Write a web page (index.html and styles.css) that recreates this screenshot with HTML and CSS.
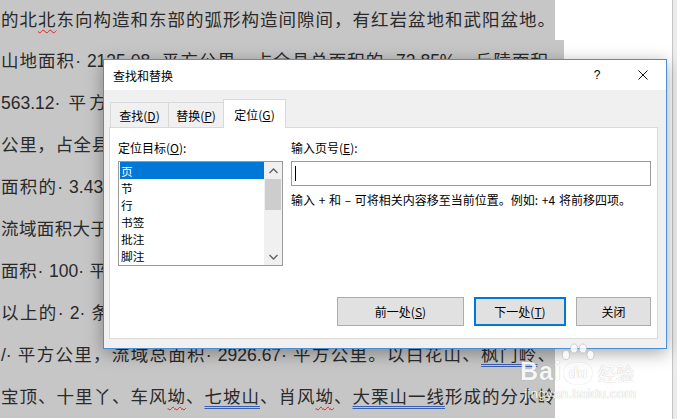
FILE: index.html
```html
<!DOCTYPE html>
<html lang="zh-CN">
<head>
<meta charset="utf-8">
<title>查找和替换</title>
<link rel="stylesheet" href="styles.css">
</head>
<body>
<div class="screen">
  <div class="doc">
    <div class="line first">的北<span class="wavy">北</span>东向构造和东部的弧形构造间隙间，有红岩盆地和武阳盆地。</div>
    <div class="line wide">山地面积· 2135.08· 平方公里，占全县总面积的· 72.85%，丘陵面积·</div>
    <div class="line">563.12· 平方公里，占全县总面积的· 19.21%，平原面积· 102.5</div>
    <div class="line">公里，占全县总面积的· 4.65%；水域面积· 100.51· 平方公里，占全县</div>
    <div class="line">面积的· 3.43%。境内河流众多，水系发达，共有大小河流· 87· 条。</div>
    <div class="line">流域面积大于· 10· 平方公里的河流有· 37· 条，流域面积在· 50· 平方公</div>
    <div class="line">面积· 100· 平方公里以上的河流有· 8· 条，1000· 平方公里以上的河流</div>
    <div class="line">以上的· 2· 条，即沂河和东汶河，境内河长· 229.1· 公里，流域面积</div>
    <div class="line">/· 平方公里，流域总面积· 2926.67· 平方公里。以白花山、<span class="dbl">枫门岭</span>、</div>
    <div class="line">宝顶、十里丫、车风<span class="wavy">坳</span>、<span class="dbl">七坡山</span>、肖风<span class="wavy">坳</span>、<span class="dbl">大栗山一线</span>形成的分水岭</div>
  </div>
  <div class="edge"></div>
</div>

<div class="dialog">
  <div class="titlebar">
    <div class="title">查找和替换</div>
    <div class="tbtn">?</div>
    <div class="tbtn">
      <svg width="10" height="10" viewBox="0 0 10 10"><path d="M0.5 0.5 L9.5 9.5 M9.5 0.5 L0.5 9.5" stroke="#111" stroke-width="1" fill="none"/></svg>
    </div>
  </div>
  <div class="dbody">
    <div class="tabs">
      <div class="tab t1">查找(<u>D</u>)</div>
      <div class="tab t2">替换(<u>P</u>)</div>
      <div class="tab t3 active">定位(<u>G</u>)</div>
    </div>
    <div class="panel">
      <div class="cols">
        <div class="left">
          <div class="label">定位目标(<u>O</u>):</div>
          <div class="listbox">
            <div class="items">
              <div class="item sel">页</div>
              <div class="item">节</div>
              <div class="item">行</div>
              <div class="item">书签</div>
              <div class="item">批注</div>
              <div class="item">脚注</div>
            </div>
            <div class="sbar">
              <div class="arrow">
                <svg width="9" height="6" viewBox="0 0 9 6"><path d="M0.5 5 L4.5 1 L8.5 5" stroke="#606060" stroke-width="1.3" fill="none"/></svg>
              </div>
              <div class="thumb"></div>
              <div class="track"></div>
              <div class="arrow">
                <svg width="9" height="6" viewBox="0 0 9 6"><path d="M0.5 1 L4.5 5 L8.5 1" stroke="#606060" stroke-width="1.3" fill="none"/></svg>
              </div>
            </div>
          </div>
        </div>
        <div class="right">
          <div class="label">输入页号(<u>E</u>):</div>
          <div class="input"><span class="caret"></span></div>
          <div class="help">输入 + 和 – 可将相关内容移至当前位置。例如: +4 将前移四项。</div>
        </div>
      </div>
      <div class="buttons">
        <div class="btn prev">前一处(<u>S</u>)</div>
        <div class="btn next default">下一处(<u>T</u>)</div>
        <div class="btn close">关闭</div>
      </div>
    </div>
  </div>
</div>

<div class="wm">
  <div class="wm-top">
    <span class="wm-bai">Bai</span>
    <span class="wm-paw">
      <svg class="toes" width="34" height="18" viewBox="0 0 34 18">
        <ellipse cx="5" cy="12" rx="3.5" ry="4.5" fill="#fff" stroke="#bdbdbd" stroke-width="0.8"/>
        <ellipse cx="13" cy="5.5" rx="3.5" ry="4.5" fill="#fff" stroke="#bdbdbd" stroke-width="0.8"/>
        <ellipse cx="22" cy="5.5" rx="3.5" ry="4.5" fill="#fff" stroke="#bdbdbd" stroke-width="0.8"/>
        <ellipse cx="29.5" cy="12" rx="3.5" ry="4.5" fill="#fff" stroke="#bdbdbd" stroke-width="0.8"/>
      </svg>
      <span class="wm-du">du</span>
    </span>
    <span class="wm-jy">经验</span>
  </div>
  <div class="wm-url">jingyan.baidu.com</div>
</div>
</body>
</html>
```

FILE: styles.css
```css
* { box-sizing: border-box; }
html, body { margin: 0; padding: 0; }
body {
  width: 677px;
  height: 419px;
  overflow: hidden;
  position: relative;
  background: #fff;
  font-family: "Liberation Sans", "Noto Sans CJK SC", sans-serif;
}

/* document behind */
.screen { display: flex; height: 419px; }
.doc { width: 672px; }
.line {
  width: 555px;
  height: 42px;
  line-height: 42px;
  padding-left: 1px;
  background: #c6c6c6;
  color: #2a2a2a;
  font-size: 17.5px;
  text-align: justify;
  text-align-last: justify;
  overflow: hidden;
}
.line.first { height: 40px; line-height: 40px; }
.line.wide { width: 564px; padding-right: 9px; }
.wavy {
  text-decoration: underline wavy #e02020;
  text-decoration-thickness: 1px;
  text-underline-offset: 3px;
}
.dbl {
  text-decoration: underline double #3a5fb0;
  text-decoration-thickness: 1px;
  text-underline-offset: 3px;
}
.edge {
  width: 5px;
  border-left: 1px solid #c4c4c4;
  background: #ececec;
}

/* dialog */
.dialog {
  position: absolute;
  left: 103px;
  top: 59px;
  width: 564px;
  height: 290px;
  background: #f0f0f0;
  border: 1px solid #4a8fd6;
  box-shadow: 0 4px 16px rgba(0, 0, 0, 0.35);
  font-family: "Noto Sans CJK SC", "Liberation Sans", sans-serif;
  font-size: 12px;
  color: #000;
  display: flex;
  flex-direction: column;
}
.titlebar {
  height: 30px;
  background: #fff;
  display: flex;
  align-items: center;
}
.title { flex: 1; padding-left: 9px; }
.tbtn {
  width: 46px;
  height: 30px;
  display: flex;
  align-items: center;
  justify-content: center;
  font-family: "Liberation Sans", sans-serif;
  font-size: 12px;
}
.dbody {
  flex: 1;
  padding: 9px 8px 9px 5px;
  display: flex;
  flex-direction: column;
}
.tabs {
  height: 28px;
  display: flex;
  align-items: flex-end;
  padding-left: 1px;
}
.tab {
  height: 25px;
  border: 1px solid #d9d9d9;
  border-bottom: none;
  margin-right: -1px;
  display: flex;
  align-items: center;
  justify-content: center;
  background: #f0f0f0;
}
.tab.t1 { width: 59px; }
.tab.t2 { width: 56px; }
.tab.t3 { width: 63px; }
.tab.active {
  height: 29px;
  margin-bottom: -1px;
  background: #fff;
  position: relative;
  z-index: 1;
}
.panel {
  height: 212px;
  background: #fff;
  border: 1px solid #d9d9d9;
  padding: 12px 6px 12px 8px;
  display: flex;
  flex-direction: column;
}
.cols { display: flex; gap: 8px; }
.left { width: 165px; }
.right { flex: 1; }
.label { height: 16px; line-height: 16px; margin-bottom: 5px; }
.listbox {
  height: 105px;
  border: 1px solid #9a9a9a;
  padding-left: 1px;
  display: flex;
}
.items { flex: 1; }
.item { height: 17px; line-height: 17px; padding-left: 1px; font-size: 11.7px; }
.item.sel { background: #0078d7; color: #fff; }
.sbar {
  width: 18px;
  background: #f0f0f0;
  display: flex;
  flex-direction: column;
}
.arrow {
  height: 17px;
  display: flex;
  align-items: center;
  justify-content: center;
}
.thumb { height: 31px; margin: 0 1px; background: #cdcdcd; }
.track { flex: 1; }
.input {
  height: 25px;
  border: 1px solid #9a9a9a;
  display: flex;
  align-items: center;
}
.caret {
  width: 1px;
  height: 15px;
  margin-left: 3px;
  background: #000;
}
.help { margin-top: 6px; line-height: 16px; white-space: nowrap; word-spacing: 1px; }
.buttons {
  margin-top: auto;
  display: flex;
  justify-content: flex-end;
  gap: 10px;
}
.btn {
  height: 29px;
  border: 1px solid #adadad;
  background: #e1e1e1;
  display: flex;
  align-items: center;
  justify-content: center;
}
.btn.prev { width: 127px; }
.btn.next { width: 92px; }
.btn.close { width: 75px; }
.btn.default { border: 2px solid #0078d7; }

/* watermark overlay */
.wm {
  position: absolute;
  left: 520px;
  top: 342px;
  width: 125px;
  color: #fff;
  opacity: 0.85;
  text-shadow: 0 0 1px rgba(90, 90, 90, 0.55);
}
.wm-top { display: flex; align-items: flex-end; height: 42px; }
.wm-bai {
  font-family: "Liberation Sans", sans-serif;
  font-weight: bold;
  font-size: 25px;
  line-height: 24px;
  letter-spacing: 1px;
  margin-bottom: 1px;
}
.wm-paw {
  position: relative;
  width: 30px;
  height: 42px;
  display: flex;
  align-items: flex-end;
  justify-content: center;
  margin-left: 1px;
}
.toes { position: absolute; left: -2px; top: 1px; }
.wm-du {
  width: 28px;
  height: 21px;
  border: 1.5px solid #fff;
  border-radius: 9px 9px 10px 10px;
  box-shadow: 0 0 1px rgba(90, 90, 90, 0.55);
  font-family: "Liberation Sans", sans-serif;
  font-weight: bold;
  font-size: 15px;
  line-height: 17px;
  text-align: center;
}
.wm-jy {
  font-family: "Noto Sans CJK SC", sans-serif;
  font-size: 18px;
  line-height: 22px;
  margin-left: 5px;
}
.wm-url {
  font-family: "Liberation Sans", sans-serif;
  font-size: 13.5px;
  line-height: 16px;
  margin-top: 2px;
  margin-left: 4px;
  letter-spacing: 0.2px;
}
```
